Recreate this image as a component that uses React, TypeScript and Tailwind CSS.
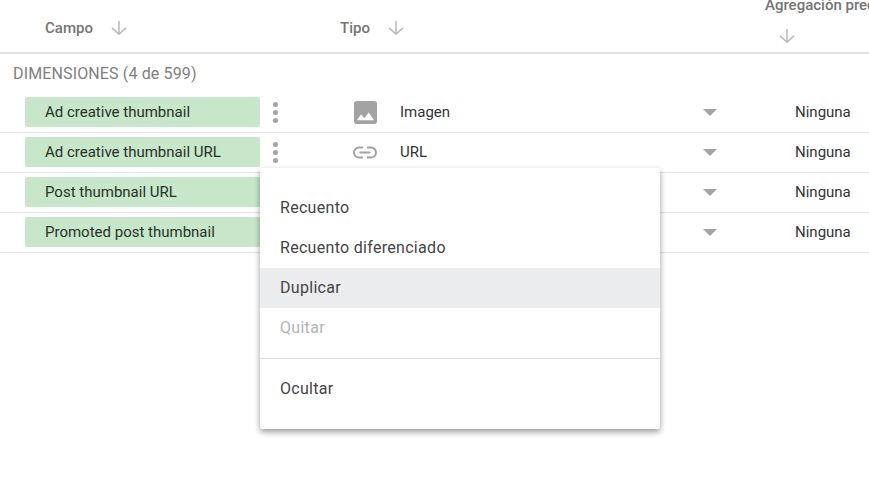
const font = { fontFamily: 'Roboto, sans-serif' };

function ArrowDown({ className }: { className?: string }) {
  return (
    <svg viewBox="0 0 16 16" className={`w-4 h-4 ${className ?? ''}`} fill="none" stroke="#bdbdbd" strokeWidth="1.6">
      <path d="M8 1v13M1 7.8 8 14.2l7-6.4" />
    </svg>
  );
}

function Dots() {
  return (
    <div className="flex flex-col items-center gap-[3px] w-[5px]">
      <span className="w-[5px] h-[5px] rounded-full bg-[#a3a3a3]" />
      <span className="w-[5px] h-[5px] rounded-full bg-[#a3a3a3]" />
      <span className="w-[5px] h-[5px] rounded-full bg-[#a3a3a3]" />
    </div>
  );
}

function ImageIcon() {
  return (
    <svg viewBox="0 0 24 24" className="w-[23px] h-[23px]" fill="#a3a3a3">
      <path d="M24 21.3V2.7C24 1.2 22.8 0 21.3 0H2.7C1.2 0 0 1.2 0 2.7v18.6C0 22.8 1.2 24 2.7 24h18.6c1.5 0 2.7-1.2 2.7-2.7ZM7.3 14l3.4 4 4.6-6 5.7 8H3l4.3-6Z" />
    </svg>
  );
}

function LinkIcon() {
  return (
    <svg viewBox="0 0 26 13" className="w-[26px] h-[13px]" fill="none" stroke="#a3a3a3" strokeWidth="2">
      <path d="M11 1.5H7a5 5 0 0 0 0 10h4M15 1.5h4a5 5 0 0 1 0 10h-4M7.5 6.5h11" />
    </svg>
  );
}

function Caret() {
  return <div className="w-0 h-0 border-x-[7px] border-x-transparent border-t-[7px] border-t-[#a3a3a3]" />;
}

const rows = [
  { name: 'Ad creative thumbnail', type: 'Imagen', icon: <ImageIcon /> },
  { name: 'Ad creative thumbnail URL', type: 'URL', icon: <LinkIcon /> },
  { name: 'Post thumbnail URL', type: '', icon: null },
  { name: 'Promoted post thumbnail', type: '', icon: null },
];

function MenuItem({ label, active, disabled }: { label: string; active?: boolean; disabled?: boolean }) {
  return (
    <div
      className={`h-10 flex items-center px-5 text-[16px] tracking-[0.3px] ${active ? 'bg-[#ebecee]' : ''} ${
        disabled ? 'text-[#b4b4b4]' : 'text-[#444444]'
      }`}
    >
      {label}
    </div>
  );
}

export default function App() {
  return (
    <div className="relative w-[869px] h-[477px] bg-white overflow-hidden" style={font}>
      <div className="flex h-[54px] border-b-2 border-[#e3e3e3] text-[15px] font-medium text-[#757575]">
        <div className="w-[340px] pl-[45px] pt-[3px] flex items-center gap-[18px]">
          <span className="pt-[1px]">Campo</span>
          <ArrowDown />
        </div>
        <div className="w-[425px] pt-[3px] flex items-center gap-[18px]">
          <span className="pt-[1px]">Tipo</span>
          <ArrowDown />
        </div>
        <div className="flex-1 min-w-0 overflow-hidden whitespace-nowrap">
          <div className="h-[10px] leading-[10px]">Agregación predeterminada</div>
          <ArrowDown className="ml-[14px] mt-[18px]" />
        </div>
      </div>

      <div className="h-[39px] pl-[13px] flex items-center text-[16px] tracking-[0.14px] text-[#808080]">
        DIMENSIONES (4 de 599)
      </div>

      <div className="text-[15px]">
        {rows.map((r) => (
          <div key={r.name} className="h-10 border-b border-[#e3e3e3] flex items-center">
            <div className="self-start mt-1 ml-[25px] w-[235px] h-[30px] rounded-[2px] bg-[#c8e6c9] flex items-center pl-5 text-[#263228] shrink-0">
              {r.name}
            </div>
            <div className="w-[5px] ml-[13px] shrink-0">
              <Dots />
            </div>
            <div className="w-[26px] ml-[74px] flex justify-center shrink-0">{r.icon}</div>
            <div className="ml-[22px] w-[303px] text-[#333333] shrink-0">{r.type}</div>
            <Caret />
            <div className="ml-[78px] text-[#333333]">Ninguna</div>
          </div>
        ))}
      </div>

      <div className="absolute left-[260px] top-[168px] w-[400px] h-[261px] bg-white rounded-[2px] shadow-[0_3px_6px_rgba(0,0,0,0.4)] py-5">
        <MenuItem label="Recuento" />
        <MenuItem label="Recuento diferenciado" />
        <MenuItem label="Duplicar" active />
        <MenuItem label="Quitar" disabled />
        <div className="border-t border-[#dedfe1] mt-[10px] mb-[10px]" />
        <MenuItem label="Ocultar" />
      </div>
    </div>
  );
}
